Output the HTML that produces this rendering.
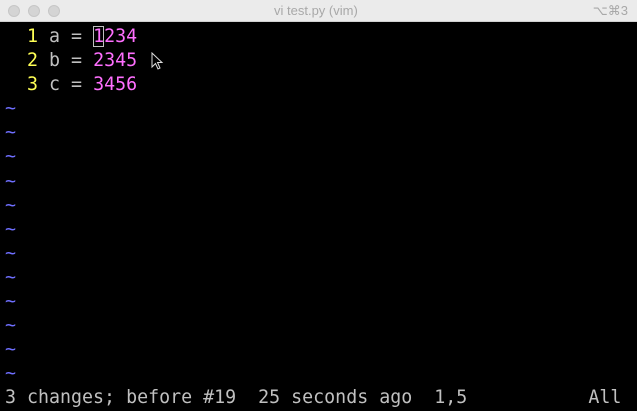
<!DOCTYPE html>
<html><head><style>
html,body{margin:0;padding:0;width:637px;height:411px;overflow:hidden;background:#000}
.bar{position:absolute;left:0;top:0;width:637px;height:22px;background:#ebebeb;border-bottom:1px solid #d0d0d0;box-sizing:border-box;font-family:"Liberation Sans",sans-serif;font-size:13px;color:#a8a8a8}
.dot{position:absolute;top:5px;width:12px;height:12px;border-radius:50%;background:#d4d4d4;border:1px solid #c6c6c6;box-sizing:border-box}
.t{position:absolute;left:274px;top:3px}
.k{position:absolute;right:9px;top:3px}
.term{position:absolute;left:5px;top:25px;font-family:"DejaVu Sans Mono",monospace;font-size:18.3px;line-height:24.1px;color:#c0c0c0;white-space:pre}
.y{color:#ffff55}.m{color:#ff6fff}.b{color:#6f6fff}
.cur{outline:1px solid #c0c0c0;outline-offset:-1px}
</style></head><body>
<div class="bar"><div class="dot" style="left:8px"></div><div class="dot" style="left:28px"></div><div class="dot" style="left:48px"></div><span class="t">vi test.py (vim)</span><span class="k">⌥⌘3</span></div>
<div class="term"><span class="y">  1 </span>a = <span class="m"><span class="cur">1</span>234</span>
<span class="y">  2 </span>b = <span class="m">2345</span>
<span class="y">  3 </span>c = <span class="m">3456</span>
<span class="b">~
~
~
~
~
~
~
~
~
~
~
~</span>
3 changes; before #19  25 seconds ago  1,5           All</div>
<svg style="position:absolute;left:151px;top:52px" width="14" height="20" viewBox="0 0 14 20"><path d="M1 1 L1 15 L4.5 11.5 L7 17 L9 16 L6.5 10.5 L11 10.5 Z" fill="#000" stroke="#ddd" stroke-width="1"/></svg>
</body></html>
